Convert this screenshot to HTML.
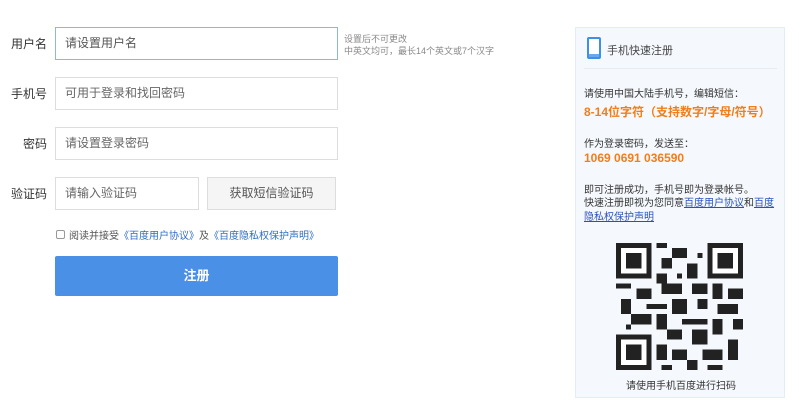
<!DOCTYPE html>
<html><head><meta charset="utf-8"><style>
*{margin:0;padding:0;box-sizing:border-box}
body{width:800px;height:410px;background:#fff;font-family:"Liberation Sans","Noto Sans CJK SC",sans-serif;position:relative;overflow:hidden;color:#333}
.a{position:absolute}
.lbl{font-size:12px;color:#333;text-align:right;width:47px;left:0}
.inp{border:1px solid #ddd;background:#fff;height:33px;font-size:12px;color:#666;padding-left:9px;line-height:31px}
.btn{background:#4a90e7;border-radius:2px;color:#fff;font-weight:bold;font-size:13px;text-align:center;line-height:40px}
.p{font-size:10px;color:#333;left:584px}
.o{color:#f27d1a;font-weight:bold;font-size:12px;left:584px}
a{color:#2a50c0;text-decoration:underline}
</style></head><body>
<div class="a lbl" style="top:35px">用户名</div>
<div class="a inp" style="left:55px;top:27px;width:283px;border-color:#8eb4e8;color:#555">请设置用户名</div>
<div class="a" style="left:344px;top:33px;font-size:9px;color:#888;line-height:12px">设置后不可更改<br>中英文均可，最长14个英文或7个汉字</div>
<div class="a lbl" style="top:85px">手机号</div>
<div class="a inp" style="left:55px;top:77px;width:283px">可用于登录和找回密码</div>
<div class="a lbl" style="top:135px">密码</div>
<div class="a inp" style="left:55px;top:127px;width:283px">请设置登录密码</div>
<div class="a lbl" style="top:185px">验证码</div>
<div class="a inp" style="left:55px;top:177px;width:144px">请输入验证码</div>
<div class="a inp" style="left:207px;top:177px;width:129px;background:#f5f5f5;text-align:center;padding:0;color:#555">获取短信验证码</div>
<div class="a" style="left:56px;top:230px;width:9px;height:9px;border:1px solid #999;border-radius:2px"></div>
<div class="a" style="left:69px;top:227px;font-size:10px;color:#555">阅读并接受<span style="color:#2d6fc4">《百度用户协议》</span>及<span style="color:#2d6fc4">《百度隐私权保护声明》</span></div>
<div class="a btn" style="left:55px;top:256px;width:283px;height:40px">注册</div>

<div class="a" style="left:575px;top:27px;width:210px;height:371px;background:#f5f9fd;border:1px solid #e2edf7"></div>
<div class="a" style="left:587px;top:37px;width:14px;height:22px;border:2px solid #3f8ee8;border-radius:2px;background:#6aa8ee"></div>
<div class="a" style="left:589px;top:39px;width:10px;height:15px;background:#fff"></div>
<div class="a" style="left:607px;top:42px;font-size:11px;color:#444">手机快速注册</div>
<div class="a" style="left:584px;top:68px;width:193px;height:1px;background:#e4edf5"></div>
<div class="a p" style="top:85px">请使用中国大陆手机号，编辑短信：</div>
<div class="a o" style="top:103px">8-14位字符（支持数字/字母/符号）</div>
<div class="a p" style="top:135px">作为登录密码，发送至：</div>
<div class="a o" style="top:151px">1069 0691 036590</div>
<div class="a p" style="top:181px">即可注册成功，手机号即为登录帐号。</div>
<div class="a p" style="top:197px;line-height:14px;width:192px">快速注册即视为您同意<a>百度用户协议</a>和<a>百度隐私权保护声明</a></div>
<svg class="a" style="left:616px;top:243px" width="127" height="127" viewBox="0 0 25 25" shape-rendering="crispEdges">
<g fill="#222">
<path d="M0 0h7v7h-7zM18 0h7v7h-7zM0 18h7v7h-7z"/>
</g>
<g fill="#fff"><path d="M1 1h5v5h-5zM19 1h5v5h-5zM1 19h5v5h-5z"/></g>
<g fill="#222"><path d="M2 2h3v3h-3zM20 2h3v3h-3zM2 20h3v3h-3z"/>
<path d="M8 0h2v1h-2zM11 1h3v2h-3zM9 3h2v2h-2zM14 4h2v3h-2zM8 6h2v2h-2zM12 6h1v1h-1zM0 8h3v1h-3zM4 9h3v2h-3zM9 8h4v2h-4zM15 8h3v2h-3zM19 8h2v3h-2zM22 9h3v2h-3zM1 11h2v3h-2zM6 12h4v1h-4zM11 11h3v3h-3zM16 11h2v2h-2zM20 12h4v2h-4zM3 14h4v2h-4zM8 14h2v3h-2zM13 15h5v1h-5zM19 15h2v3h-2zM23 15h2v2h-2zM10 17h3v2h-3zM15 17h3v3h-3zM8 20h2v3h-2zM11 21h3v2h-3zM17 21h4v2h-4zM22 19h2v4h-2zM14 23h2v2h-2zM9 24h2v1h-2zM18 24h3v1h-3zM16 2h1v1h-1zM2 16h1v1h-1z"/></g>
</svg>
<div class="a" style="left:626px;top:377px;font-size:10px;color:#333">请使用手机百度进行扫码</div>
</body></html>
